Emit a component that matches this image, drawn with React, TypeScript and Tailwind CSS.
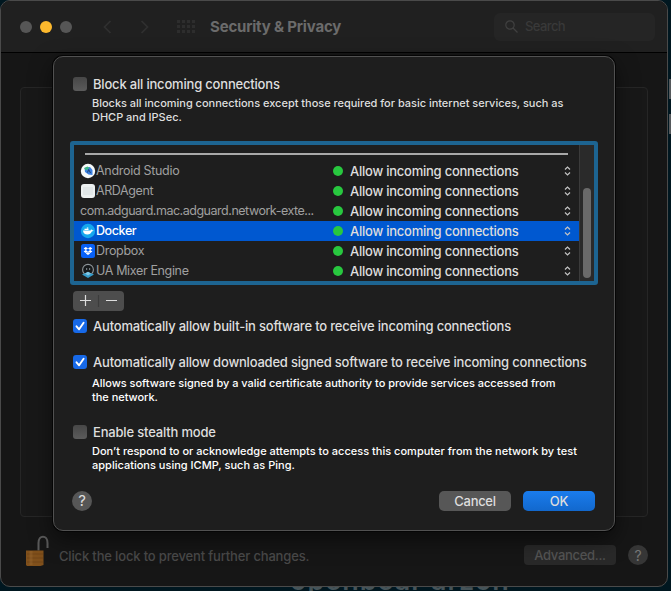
import React from "react";

const apps = [
  { name: "Android Studio", icon: "android", tracking: "tracking-[-0.3px]" },
  { name: "ARDAgent", icon: "ard", tracking: "tracking-[-0.4px]" },
  { name: "com.adguard.mac.adguard.network-exte...", icon: "", tracking: "tracking-[-0.48px]" },
  { name: "Docker", icon: "docker", tracking: "tracking-[-0.4px]" },
  { name: "Dropbox", icon: "dropbox", tracking: "tracking-[-0.3px]" },
  { name: "UA Mixer Engine", icon: "ua", tracking: "tracking-[-0.35px]" },
];

function AppIcon({ kind }: { kind: string }) {
  return (
    <svg className="h-4 w-4 shrink-0" viewBox="0 0 16 16">
      {kind === "android" && (
        <>
          <circle cx="8" cy="8" r="7.2" fill="#f6faf9" />
          <path d="M4.500 5 10 4l2.500 3v5L8.500 11.500 5 9z" fill="#3b7fe0" />
          <path d="m4 5 3.500-1.500L9.500 5 6 7.500z" fill="#3fb684" />
          <path d="m7.500 9.500 1.200-3 1.800 3.500" stroke="#1e4470" fill="none" />
        </>
      )}
      {kind === "ard" && (
        <>
          <rect x="1" y="1" width="14" height="14" rx="3" fill="#edf1f1" />
          <path d="M3 4h10v8H3z" fill="#e1e7e8" />
        </>
      )}
      {kind === "docker" && (
        <>
          <circle cx="8" cy="8" r="7.2" fill="#16a8ed" />
          <path d="M3 7.500h7.200c.500 0 .800-.400.700-1.200.800.200 1 .600 1.100 1 .700-.100 1.200 0 1.500.200-.400.700-1 .900-1.700.900-.800 2-2.200 3-4.300 3C4.700 11.400 3.200 10 3 7.500z" fill="#fff" />
          <path d="M4.500 5.800h4V7h-4zM6.800 4.500h1.500v1H6.800z" fill="#fff" />
        </>
      )}
      {kind === "dropbox" && (
        <>
          <rect x="1" y="1" width="14" height="14" rx="2.500" fill="#0861f7" />
          <path d="m5.800 4 2.200 1.500-2.200 1.500-2.200-1.500zm4.400 0 2.200 1.500L10.200 7 8 5.500zM5.800 7 8 8.500 5.800 10 3.600 8.500zm4.400 0 2.200 1.500-2.200 1.500L8 8.500zM5.800 10.400 8 9l2.200 1.400L8 12z" fill="#fff" />
        </>
      )}
      {kind === "ua" && (
        <>
          <circle cx="8" cy="6.800" r="5.400" fill="#16191b" stroke="#8f969a" strokeWidth="1.100" />
          <path d="M6 5h1.200v2H6zM9 5h1.200v2H9z" fill="#737a7e" />
          <path d="m8 9 6 2.600L8 15l-6-3.400z" fill="#369bca" />
          <path d="m8 8.800 3 1.700-3 2-3-2z" fill="#82c7e4" />
        </>
      )}
    </svg>
  );
}

function Check({ on = false }: { on?: boolean }) {
  return (
    <span className={`flex h-[14px] w-[14px] shrink-0 items-center justify-center rounded-[3px] ${on ? "bg-[#1769e8]" : "bg-linear-to-b from-[#474747] to-[#5b5b5b]"}`}>
      {on && (
        <svg className="h-[14px] w-[14px]" viewBox="0 0 14 14">
          <path d="m3.500 7.300 2.600 3 4.500-6.600" fill="none" stroke="#fff" strokeWidth="1.900" strokeLinecap="round" strokeLinejoin="round" />
        </svg>
      )}
    </span>
  );
}

function Option({ on, className, children }: { on?: boolean; className: string; children: React.ReactNode }) {
  return (
    <label className={`ml-[19px] flex h-4 items-center gap-[6px] whitespace-nowrap text-[13px] font-medium ${className}`}>
      <Check on={on} />
      <span className="pt-[2px]">{children}</span>
    </label>
  );
}

function TitleBar() {
  return (
    <header className="flex h-[52px] shrink-0 items-center border-b border-black bg-[#202020] pl-[19px]">
      <div className="flex gap-2">
        <span className="h-3 w-3 rounded-full bg-[#565656]" />
        <span className="h-3 w-3 rounded-full bg-[#fdb92d]" />
        <span className="h-3 w-3 rounded-full bg-[#565656]" />
      </div>
      <svg className="ml-[30px] h-4 w-[50px]" viewBox="0 0 50 16">
        <path d="M8.500 2 2.500 8l6 6M39.500 2l6 6-6 6" fill="none" stroke="#303030" strokeWidth="1.700" />
      </svg>
      <div className="ml-[25px] grid grid-cols-4 gap-[2px]">
        {Array.from({ length: 12 }, (_, i) => <span key={i} className="h-[3px] w-[3px] bg-[#2d2d2d]" />)}
      </div>
      <h1 className="ml-[15px] whitespace-nowrap text-[15px] font-bold leading-5 tracking-[-0.18px] text-[#6b6b6b]">Security &amp; Privacy</h1>
      <div className="mr-3 ml-auto flex h-7 w-[161px] items-center rounded-md bg-[#252525] pl-[11px] text-[13px] font-medium tracking-[-0.6px] text-[#393939]">
        <svg className="mr-[7px] h-[13px] w-[13px]" viewBox="0 0 13 13" fill="none" stroke="#404040" strokeWidth="1.200">
          <circle cx="5" cy="5" r="4.200" /><path d="m8 8 4.500 4.500" />
        </svg>
        <span className="pt-px">Search</span>
      </div>
    </header>
  );
}

function AppList() {
  return (
    <div className="mt-[17px] ml-4 flex h-[144px] w-[528px] shrink-0 rounded-[3px] border-4 border-[#1d6491] bg-[#1e1e1e]">
      <div className="w-[505px] shrink-0">
        <div className="mt-2 mb-[6px] ml-[11px] h-[2px] w-[483px] bg-[#a8a8a8]" />
        {apps.map((app) => {
          const selected = app.name === "Docker";
          return (
            <div key={app.name} className={`flex h-5 items-center text-[13px] ${selected ? "bg-[#0058d0]" : ""}`}>
              <div className={`flex w-[259px] items-center whitespace-nowrap pl-[6px] text-[12.5px] ${selected ? "font-medium text-white" : "text-[#a0a0a0]"}`}>
                {app.icon && <AppIcon kind={app.icon} />}
                <span className={app.tracking}>{app.name}</span>
              </div>
              <span className="h-[10px] w-[10px] rounded-full bg-[#28c83f]" />
              <span className="ml-[7px] w-[214px] whitespace-nowrap pt-[2px] font-medium tracking-[-0.24px] text-[#dedede]">Allow incoming connections</span>
              <svg className="h-[10px] w-[7px]" viewBox="0 0 7 10" fill="none" stroke="#c4c4c4" strokeWidth="1.200">
                <path d="m1 3.500 2.500-2.500L6 3.500M1 6.500 3.500 9 6 6.500" />
              </svg>
            </div>
          );
        })}
      </div>
      <div className="flex flex-1 justify-center border-l border-[#3b3b3b] bg-[#2a2a2a] pt-[43px]">
        <div className="h-[90px] w-2 rounded-full bg-[#6a6a6a]" />
      </div>
    </div>
  );
}

function Dialog() {
  return (
    <section className="absolute top-[56px] left-[53px] flex h-[475px] w-[562px] flex-col rounded-[10px] border border-[#515151] bg-[#1e1e1e] text-[#dedede] shadow-[0_0_0_1px_#050505,0_8px_22px_#0008]">
      <Option className="mt-[19px] tracking-[-0.19px]">Block all incoming connections</Option>
      <p className="mt-1 ml-[38px] whitespace-nowrap text-[11px] font-medium leading-[14px] tracking-[-0.02px]">Blocks all incoming connections except those required for basic internet services, such as<br />DHCP and IPSec.</p>
      <AppList />
      <div className="mt-[6px] ml-[19px] flex h-5 w-[51px] shrink-0 items-center rounded bg-[#4d4d4d]">
        <svg className="h-5 w-[51px]" viewBox="0 0 51 20" fill="none" stroke="#dedede" strokeWidth="1.200"><path d="M7 9.500h11M12.500 4v11M33 9.500h11" /><path d="M25.500 4v12" stroke="#3c3c3c" /></svg>
      </div>
      <Option on className="mt-[7px] tracking-[-0.195px]">Automatically allow built-in software to receive incoming connections</Option>
      <Option on className="mt-5 tracking-[-0.205px]">Automatically allow downloaded signed software to receive incoming connections</Option>
      <p className="mt-[6px] ml-[38px] whitespace-nowrap text-[11px] font-medium leading-[14px] tracking-[-0.03px] text-white">Allows software signed by a valid certificate authority to provide services accessed from<br />the network.</p>
      <Option className="mt-5 tracking-[-0.18px]">Enable stealth mode</Option>
      <p className="mt-1 ml-[38px] whitespace-nowrap text-[11px] font-medium leading-[14px] tracking-[0.01px] text-white">Don’t respond to or acknowledge attempts to access this computer from the network by test<br />applications using ICMP, such as Ping.</p>
      <footer className="mt-[19px] flex h-5 items-center pr-[19px] pl-[18px]">
        <span className="flex h-5 w-5 items-center justify-center rounded-full bg-[#565656] pt-px text-[15px]">?</span>
        <button className="ml-auto h-5 w-[72px] rounded-[5px] bg-[#575757] pt-px text-[13px] font-medium leading-[19px] tracking-[-0.3px]">Cancel</button>
        <button className="ml-3 h-5 w-[72px] rounded-[5px] bg-linear-to-b from-[#1a7ced] to-[#1268cd] pt-px text-[13px] font-medium leading-[19px] tracking-[-0.3px]">OK</button>
      </footer>
    </section>
  );
}

export default function App() {
  return (
    <main className="relative h-[591px] w-[671px] overflow-hidden bg-[#001720] font-['Inter','Liberation_Sans',sans-serif]">
      <span className="absolute top-[565px] left-[290px] whitespace-nowrap text-[27px] font-semibold leading-8 tracking-[1px] text-[#465459]">openbear arzon</span>
      <span className="absolute top-[79px] right-0 h-5 w-[2px] bg-[#55595c]" />
      <span className="absolute top-[114px] right-0 h-5 w-[2px] bg-[#55595c]" />
      <div className="relative flex h-[587px] w-[668px] flex-col overflow-hidden rounded-[10px] border border-[#4a4a4a] bg-[#161616]">
        <TitleBar />
        <div className="mt-[34px] ml-[19px] h-[430px] w-[628px] shrink-0 rounded border border-[#262626] bg-[#181818]" />
        <footer className="mt-[18px] flex h-10 items-center pr-[19px] pl-[25px] text-[#494949]">
          <svg className="mb-[9px] h-8 w-6" viewBox="0 0 24 32"><path d="M12.500 15.500V8c0-8.500 9-8.500 9 0v5" fill="none" stroke="#5a5a5a" strokeWidth="2" /><path d="M0 15.500h17.500V30l-3 1H1l-1-1z" fill="#80501b" /><path d="M1 19h16M1 23h16M1 27h16" stroke="#6d4217" strokeWidth=".800" /><path d="M5 16v14" stroke="#986a32" strokeWidth="3" opacity=".400" /></svg>
          <span className="ml-[9px] whitespace-nowrap pt-[3px] text-[13px] font-medium tracking-[-0.16px]">Click the lock to prevent further changes.</span>
          <span className="ml-auto flex h-5 w-[92px] items-center justify-center rounded bg-[#292929] pt-px text-[13px] font-medium tracking-[-0.3px] text-[#545454]">Advanced...</span>
          <span className="ml-3 flex h-5 w-5 items-center justify-center rounded-full bg-[#363636] text-[14px] text-[#777]">?</span>
        </footer>
      </div>
      <Dialog />
    </main>
  );
}
